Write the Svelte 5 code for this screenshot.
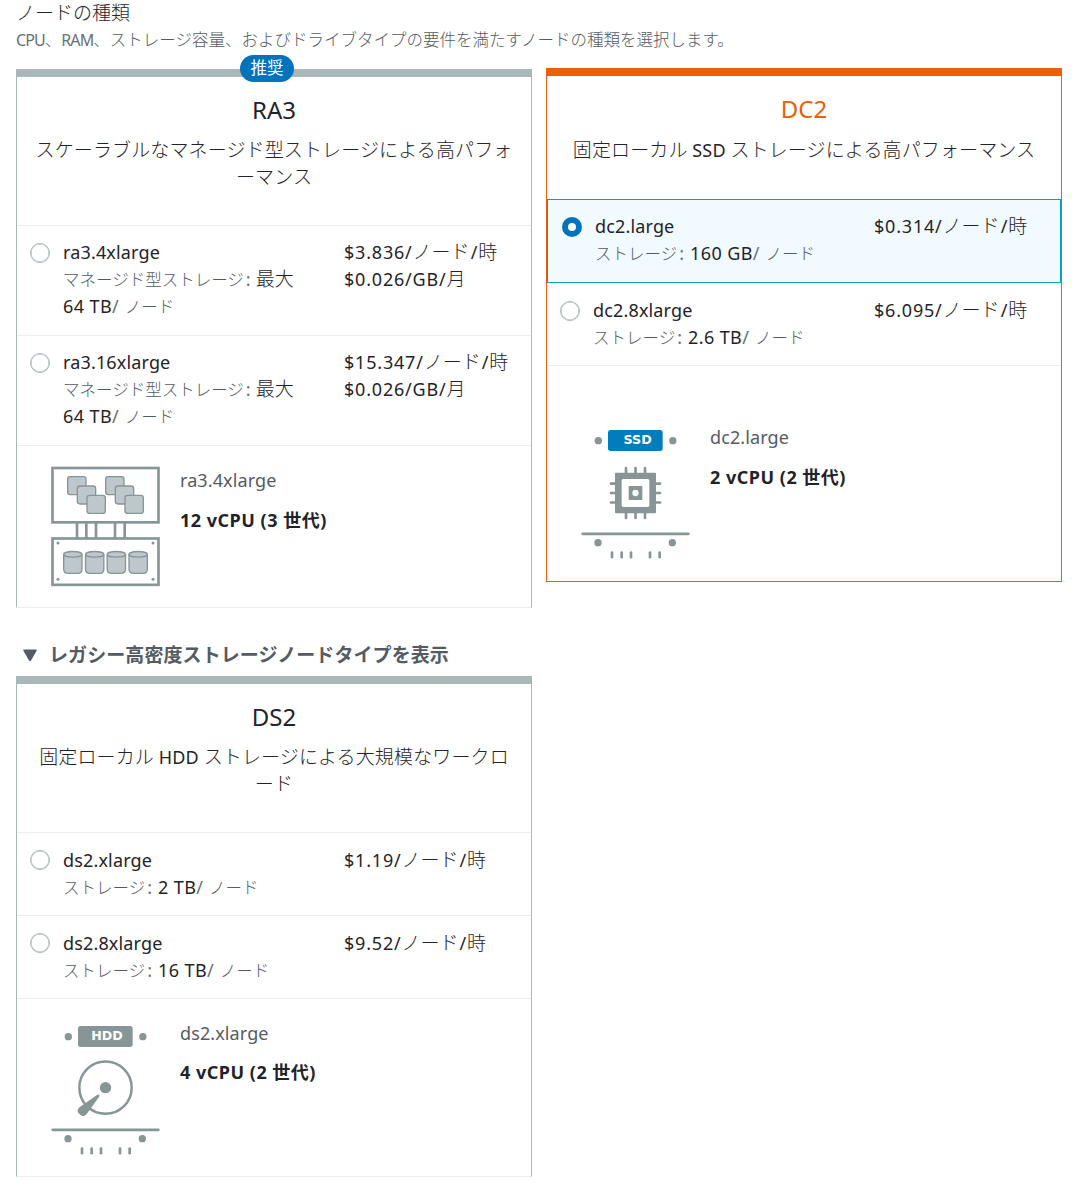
<script>
  const families = {
    ra3: {
      title: 'RA3',
      badge: '推奨',
      lines: [
        [['jp', 'スケーラブルなマネージド型ストレージによる高パフォ']],
        [['jp', 'ーマンス']]
      ],
      rows: [
        {
          name: 'ra3.4xlarge',
          label: 'マネージド型ストレージ',
          lead: '最大',
          size: '64 TB',
          price: '$3.836/',
          extra: '$0.026/GB/'
        },
        {
          name: 'ra3.16xlarge',
          label: 'マネージド型ストレージ',
          lead: '最大',
          size: '64 TB',
          price: '$15.347/',
          extra: '$0.026/GB/'
        }
      ],
      icon: 'cluster',
      node: 'ra3.4xlarge',
      cpu: ['12 vCPU (3 ', '世代', ')']
    },
    dc2: {
      title: 'DC2',
      active: true,
      lines: [
        [
          ['jp', '固定ローカル'],
          ['en', ' SSD '],
          ['jp', 'ストレージによる高パフォーマンス']
        ]
      ],
      rows: [
        { name: 'dc2.large', label: 'ストレージ', size: '160 GB', price: '$0.314/', selected: true },
        { name: 'dc2.8xlarge', label: 'ストレージ', size: '2.6 TB', price: '$6.095/' }
      ],
      icon: 'ssd',
      node: 'dc2.large',
      cpu: ['2 vCPU (2 ', '世代', ')']
    },
    ds2: {
      title: 'DS2',
      lines: [
        [
          ['jp', '固定ローカル'],
          ['en', ' HDD '],
          ['jp', 'ストレージによる大規模なワークロ']
        ],
        [['jp', 'ード']]
      ],
      legacy: true,
      rows: [
        { name: 'ds2.xlarge', label: 'ストレージ', size: '2 TB', price: '$1.19/' },
        { name: 'ds2.8xlarge', label: 'ストレージ', size: '16 TB', price: '$9.52/' }
      ],
      icon: 'hdd',
      node: 'ds2.xlarge',
      cpu: ['4 vCPU (2 ', '世代', ')']
    }
  };
  const squares = [
    [113, 80], [142, 108], [171, 136],
    [227, 80], [256, 108], [285, 136]
  ];
</script>

{#snippet base(x, y)}
  <path class="line" d="M{x} {y}h317" stroke-width="8" stroke-linecap="round" />
  <circle class="solid" cx={x + 46} cy={y + 26.5} r="11" />
  <circle class="solid" cx={x + 269} cy={y + 26.5} r="11" />
  {#each [88, 117, 145, 202, 231] as dx}
    <path class="line" d="M{x + dx} {y + 56}v14" stroke-width="8" stroke-linecap="round" />
  {/each}
{/snippet}

{#snippet icon(kind)}
  {#if kind === 'cluster'}
    <svg class="icon" width="109" height="121" viewBox="63 48 327 363">
      {#each [141, 169, 198, 255, 284] as x}
        <path class="line" d="M{x} 218v50" stroke-width="8" />
      {/each}
      <rect class="box" x="67.5" y="54" width="318" height="163" />
      <rect class="box" x="67.5" y="265.500" width="318" height="139" />
      {#each squares as [x, y]}
        <rect class="tile" {x} {y} width="55" height="54" rx="8" />
      {/each}
      {#each [101, 166.500, 231.500, 297] as x}
        <path class="tile" d="M{x} 313v44q0 13 13 13h29q13 0 13-13v-44" />
        <ellipse class="tile" cx={x + 27.5} cy="313" rx="27.500" ry="8.500" />
      {/each}
      {#each [84, 369] as x}
        <circle class="solid" cx={x} cy="279" r="4.500" />
        <circle class="solid" cx={x} cy="388" r="4.500" />
      {/each}
    </svg>
  {:else if kind === 'ssd'}
    <svg class="icon" width="109" height="131" viewBox="33 42 327 393">
      <circle class="solid" cx="85" cy="77" r="11" />
      <circle class="solid" cx="308.500" cy="77" r="11" />
      <rect class="blue" x="114" y="45" width="164" height="63" rx="8" />
      <text x="203" y="88">SSD</text>
      {#each [168, 196.500, 225] as x}
        <path class="line" d="M{x} 159v150" stroke-width="8" stroke-linecap="round" />
      {/each}
      {#each [206, 234, 262.500] as y}
        <path class="line" d="M123 {y}h147" stroke-width="8" stroke-linecap="round" />
      {/each}
      <rect class="solid" x="135" y="173" width="123" height="122" rx="3" />
      <rect class="white" x="155" y="192" width="83" height="84" rx="5" />
      <rect class="solid" x="176" y="213" width="41" height="42" rx="2" />
      <circle class="white" cx="196.500" cy="234" r="9.500" />
      {@render base(38, 356.5)}
    </svg>
  {:else}
    <svg class="icon" width="109" height="131" viewBox="63 45 327 393">
      <circle class="solid" cx="115" cy="80" r="11" />
      <circle class="solid" cx="338.500" cy="80" r="11" />
      <rect class="solid" x="144" y="48" width="164" height="63" rx="8" />
      <text x="231" y="91">HDD</text>
      <circle class="line" cx="226.500" cy="233" r="78.500" stroke-width="7.500" />
      <circle class="solid" cx="226.500" cy="233" r="17" />
      <path
        class="solid"
        d="M202 254Q208 252 209 258L174 307L167 315Q160 322 151 315L145 308Q140 300 147 293L155 287Z"
      />
      {@render base(68, 359.5)}
    </svg>
  {/if}
{/snippet}

{#snippet card(f)}
  <section class="card" class:active={f.active} class:legacy={f.legacy}>
    {#if f.badge}<span class="badge">{f.badge}</span>{/if}
    <header>
      <h2>{f.title}</h2>
      {#each f.lines as line}
        <p class="sub">{#each line as [kind, text]}<span class={kind}>{text}</span>{/each}</p>
      {/each}
    </header>
    {#each f.rows as r}
      <div class="row" class:selected={r.selected}>
        <span class="radio"></span>
        <div class="spec">
          <div class="name">{r.name}</div>
          <div class="storage">
            <span class="label">{r.label}</span><span class="colon" class:tight={r.lead}>:</span>{#if r.lead}<span class="jp">{r.lead}</span><br />{/if}<span
              class="size">{r.size}</span><span class="slash">/</span><span class="label unit">ノード</span>
          </div>
        </div>
        <div class="price">
          <div><span class="num">{r.price}</span><span class="jp">ノード</span><span class="num per">/</span><span class="jp">時</span></div>
          {#if r.extra}<div><span class="num">{r.extra}</span><span class="jp">月</span></div>{/if}
        </div>
      </div>
    {/each}
    <footer class={f.icon}>
      {@render icon(f.icon)}
      <div class="info">
        <div class="node">{f.node}</div>
        <div class="cpu">{f.cpu[0]}<span>{f.cpu[1]}</span>{f.cpu[2]}</div>
      </div>
    </footer>
  </section>
{/snippet}

<main>
  <h1>ノードの種類</h1>
  <p class="desc"><span class="abbr">CPU</span>、<span class="abbr">RAM</span>、ストレージ容量、およびドライブタイプの要件を満たすノードの種類を選択します。</p>
  <div class="pair">
    {@render card(families.ra3)}
    {@render card(families.dc2)}
  </div>
  <div class="toggle">
    <svg width="14" height="13" viewBox="0 0 14 13"><path d="M1 .5h12q1.200 0 .6 1.200L8 11.500q-1 1.200-2 0L.4 1.700Q-.2 .5 1 .5z" /></svg>
    <span>レガシー高密度ストレージノードタイプを表示</span>
  </div>
  <div class="pair">{@render card(families.ds2)}</div>
</main>

<style>
  :global(body) {
    background: #fff;
  }
  main {
    box-sizing: border-box;
    width: 1072px;
    height: 1200px;
    overflow: hidden;
    padding: 0 10px 0 16px;
    font: 18px/27px 'Noto Sans', 'Noto Sans CJK JP', sans-serif;
    color: #1f232a;
    white-space: nowrap;
  }
  h1,
  h2,
  p {
    margin: 0;
    font-weight: 400;
  }
  h1 {
    font-size: 19px;
    font-weight: 300;
    line-height: 26px;
  }
  .desc {
    height: 42px;
    font-size: 16.500px;
    font-weight: 300;
    line-height: 28px;
    color: #545b64;
  }
  .abbr {
    font-size: 16px;
    font-weight: 400;
    letter-spacing: -0.900px;
    color: #687078;
  }
  .pair {
    display: flex;
    align-items: flex-start;
    gap: 14px;
  }
  .card {
    position: relative;
    box-sizing: border-box;
    width: 516px;
    margin-top: 1px;
    border: 1px solid #aab7b8;
    border-top-width: 8px;
    border-bottom-color: #eaeded;
  }
  .active {
    margin-top: 0;
    border-color: #eb5f07;
  }
  .badge {
    position: absolute;
    top: -22px;
    left: 223px;
    width: 54px;
    height: 27px;
    border-radius: 14px;
    background: #0073bb;
    color: #fff;
    font-size: 16.500px;
    line-height: 26px;
    text-align: center;
  }
  header {
    box-sizing: border-box;
    height: 148px;
    padding-top: 15px;
    text-align: center;
  }
  .active header {
    height: 122px;
  }
  h2 {
    margin-bottom: 9px;
    font-size: 24px;
    line-height: 36px;
  }
  .active h2 {
    margin-bottom: 10px;
    color: #eb5f07;
  }
  .sub {
    letter-spacing: 0.130px;
  }
  .jp {
    font-size: 19px;
    font-weight: 300;
    line-height: 1;
  }
  .row {
    display: grid;
    grid-template-columns: 33px 281px 1fr;
    padding: 13px 0 15px 13px;
    border-top: 1px solid #eaeded;
  }
  .legacy .row {
    padding: 14px 0 14px 13px;
  }
  .row.selected {
    grid-template-columns: 33px 279px 1fr;
    margin-top: 1px;
    padding: 13px 0 15px 14px;
    border: 1px solid #00a1c9;
    background: #f1faff;
  }
  .active .row:not(.selected) {
    padding-bottom: 14px;
    border-top-color: transparent;
  }
  .name {
    letter-spacing: 0.150px;
  }
  .radio {
    box-sizing: border-box;
    width: 20px;
    height: 20px;
    margin-top: 4px;
    border: 1.500px solid #aab7b8;
    border-radius: 50%;
    background: #fff;
    box-shadow: inset 0 0 0 0.500px #aab7b8;
  }
  .legacy .radio {
    margin-top: 3px;
  }
  .selected .radio {
    border: 6px solid #0073bb;
    box-shadow: none;
  }
  .label {
    font-size: 16.500px;
    font-weight: 300;
    line-height: 1;
    color: #545b64;
  }
  .colon {
    margin: 0 6px 0 2px;
    color: #687078;
  }
  .colon.tight {
    margin: 0 5px 0 2px;
  }
  .size {
    letter-spacing: 0.400px;
  }
  .slash {
    margin-right: 6px;
    color: #687078;
  }
  .num {
    letter-spacing: 0.800px;
  }
  .per {
    margin-left: 1px;
  }
  footer {
    display: flex;
    gap: 20px;
    box-sizing: border-box;
    height: 162px;
    padding: 20px 0 0 34px;
    border-top: 1px solid #eaeded;
  }
  footer.ssd {
    height: 216px;
    padding-top: 63px;
  }
  footer.hdd {
    height: 178px;
    padding-top: 26px;
  }
  .info {
    padding-top: 1px;
  }
  .hdd .info,
  .ssd .info {
    padding-top: 0;
    margin-top: -5px;
  }
  .node {
    margin-bottom: 13px;
    color: #545b64;
    letter-spacing: 0.100px;
  }
  .hdd .node {
    margin-bottom: 12px;
  }
  .cpu {
    font-weight: 700;
    letter-spacing: 0.500px;
  }
  .line,
  .box {
    fill: none;
    stroke: #879596;
  }
  .box {
    fill: #fff;
    stroke-width: 8;
  }
  .tile {
    fill: #bec7cc;
    stroke: #879596;
    stroke-width: 4;
  }
  .solid {
    fill: #879596;
  }
  .blue {
    fill: #007dbc;
  }
  .white {
    fill: #fff;
  }
  text {
    font: 700 38px 'DejaVu Sans', sans-serif;
    fill: #fff;
    text-anchor: middle;
  }
  .toggle {
    display: flex;
    align-items: center;
    gap: 12px;
    height: 27px;
    margin-top: 34px;
    margin-bottom: 6px;
    padding-left: 7px;
    font-size: 19px;
    font-weight: 700;
    letter-spacing: 0.080px;
    color: #545b64;
  }
  .toggle path {
    fill: #545b64;
  }
</style>
